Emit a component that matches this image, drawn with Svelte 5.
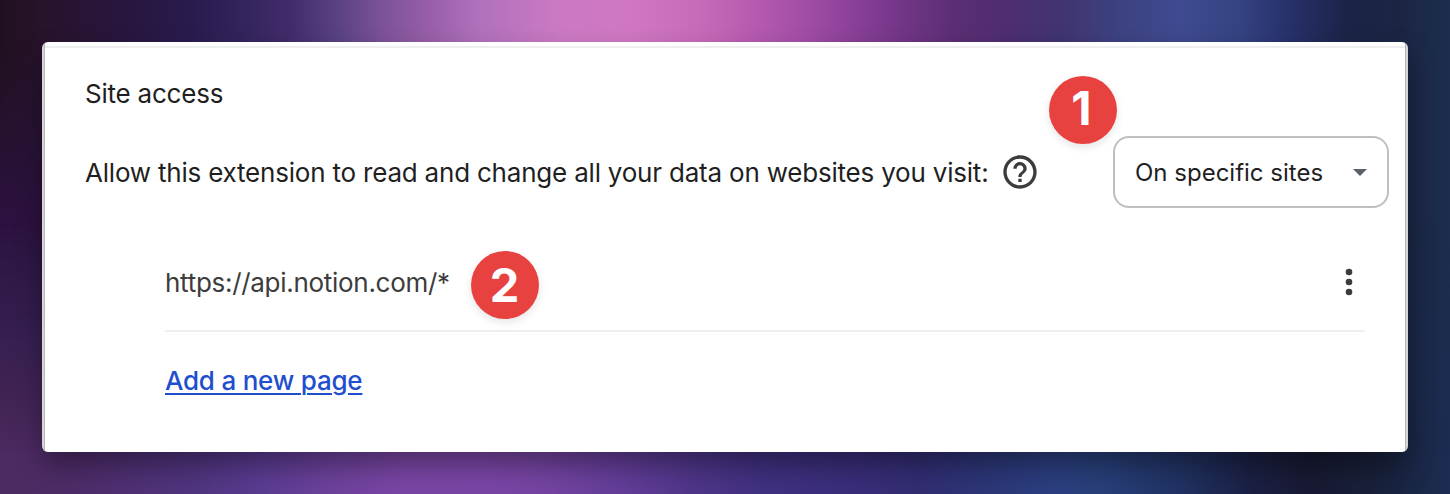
<script>
  const sites = [{ pattern: 'https://api.notion.com/*', step: 2 }];
</script>

<div class="backdrop">
  <main class="card">
    <h2>Site access</h2>
    <div class="access">
      <span class="label">Allow this extension to read and change all your data on websites you visit:</span>
      <svg class="help" viewBox="0 0 24 24" width="40" height="40">
        <path d="M11 18h2v-2h-2v2zm1-16C6.48 2 2 6.48 2 12s4.48 10 10 10 10-4.48 10-10S17.52 2 12 2zm0 18c-4.41 0-8-3.59-8-8s3.59-8 8-8 8 3.59 8 8-3.59 8-8 8zm0-14c-2.21 0-4 1.79-4 4h2c0-1.1.9-2 2-2s2 .9 2 2c0 2-3 1.75-3 5h2c0-2.25 3-2.5 3-5 0-2.21-1.79-4-4-4z" />
      </svg>
      <div class="select">
        <span class="value">On specific sites</span>
        <svg width="14" height="7" viewBox="0 0 14 7"><path d="M0 0h14L7 7z" /></svg>
        <span class="badge first">1</span>
      </div>
    </div>
    {#each sites as site}
      <div class="site">
        <span class="url">{site.pattern}</span>
        <span class="badge second">{site.step}</span>
        <svg class="more" viewBox="0 0 24 24" width="40" height="40">
          <circle cx="12" cy="6" r="2" /><circle cx="12" cy="12" r="2" /><circle cx="12" cy="18" r="2" />
        </svg>
      </div>
    {/each}
    <div class="add"><a href="#add">Add a new page</a></div>
  </main>
</div>

<style>
  :global(body) { margin: 0; overflow: hidden; }
  .backdrop {
    position: relative;
    box-sizing: border-box;
    width: 1450px;
    height: 494px;
    padding: 42px;
    overflow: hidden;
    font-family: Inter, sans-serif;
    background:
      linear-gradient(transparent 10%, #2c1240 45%, #2b1a48 70%, transparent 95%) 0 0 / 44px 100% no-repeat,
      linear-gradient(90deg, #20101f 0, #28132c 45px, #28163f 130px, #291b4e 190px, #32245c 240px, #412c6a 290px, #5b4384 340px, #7e5399 385px, #985fa8 430px, #b171bc 480px, #cc79c4 560px, #d077c3 630px, #c66bb9 700px, #b75bb0 750px, #a44fa8 800px, #8c4199 850px, #733688 900px, #5b2e74 955px, #502d70 1000px, #40346f 1060px, #3d4281 1120px, #3f4a90 1180px, #344382 1240px, #27306a 1290px, #1c2346 1350px, #1b2543 1400px, #1c2e4e 1450px);
  }
  .backdrop::before {
    content: '';
    position: absolute;
    inset: 0;
    background: linear-gradient(90deg, #4d2a60 0, #4e2c6a 80px, #503580 200px, #5a3b91 260px, #6c419b 330px, #7946a4 400px, #7a46a6 480px, #7544a2 540px, #633d98 620px, #4d3588 700px, #413080 760px, #392d7a 850px, #322d72 920px, #2c3577 980px, #2b3f80 1060px, #283f79 1100px, #203263 1180px, #1b2044 1250px, #181933 1310px, #182039 1370px, #1c2c52 1450px);
    mask-image: linear-gradient(transparent 45%, rgba(0, 0, 0, .3) 66%, #000 92%);
  }
  .card {
    position: relative;
    box-sizing: border-box;
    width: 1366px;
    height: 410px;
    padding: 33px 19px 0 43px;
    border-radius: 6px;
    background:
      linear-gradient(#efefef, #efefef) 3px 4px / 1360px 2px no-repeat,
      linear-gradient(90deg, #d6d6d6 2px, #b9b9b9 2px, #b9b9b9 3px, #fff 3px, #fff 1363px, #b9b9b9 1363px, #b9b9b9 1364px, #d6d6d6 1364px);
    box-shadow: 0 14px 28px -1px rgba(0, 0, 0, .38);
    color: #1f1f1f;
  }
  h2 {
    margin: 0;
    font-size: 26px;
    font-weight: 400;
    line-height: 38px;
    letter-spacing: -.22px;
  }
  .access { display: flex; align-items: center; height: 72px; margin-top: 23px; }
  .label { width: 915px; padding-top: 2px; font-size: 26px; line-height: 40px; letter-spacing: -.205px; white-space: nowrap; }
  .help, .more { flex: none; fill: #3c3c3c; }
  .select {
    position: relative;
    display: flex;
    box-sizing: border-box;
    align-items: center;
    justify-content: space-between;
    width: 276px;
    height: 72px;
    margin-left: auto;
    padding: 0 20px;
    border: 2px solid #bfbfbf;
    border-radius: 16px;
    font-size: 24px;
    white-space: nowrap;
  }
  .select svg { fill: #5b6066; }
  .badge {
    display: grid;
    box-sizing: border-box;
    place-items: center;
    width: 68px;
    height: 68px;
    border-radius: 50%;
    background: #e74240;
    box-shadow: 0 3px 8px rgba(0, 0, 0, .11);
    color: #fff;
    font-size: 47px;
    font-weight: 700;
    line-height: 64px;
  }
  .first { position: absolute; left: -66.5px; top: -62px; padding: 0 2px 4px 0; }
  .second { margin-top: 5px; }
  .site {
    display: flex;
    box-sizing: border-box;
    align-items: center;
    width: 1200px;
    height: 98px;
    margin: 26px 0 0 80px;
    border-bottom: 2px solid #efefef;
  }
  .url { width: 305.5px; color: #3c3c3c; font-size: 26px; letter-spacing: -.29px; white-space: nowrap; }
  .more { margin-left: auto; margin-right: -4px; }
  .add { margin: 29px 0 0 80px; line-height: 40px; }
  .add a {
    color: #1f4fcf;
    font-size: 26px;
    font-weight: 500;
    letter-spacing: -.22px;
    text-decoration-thickness: 2px;
    text-underline-offset: 3px;
  }
</style>
